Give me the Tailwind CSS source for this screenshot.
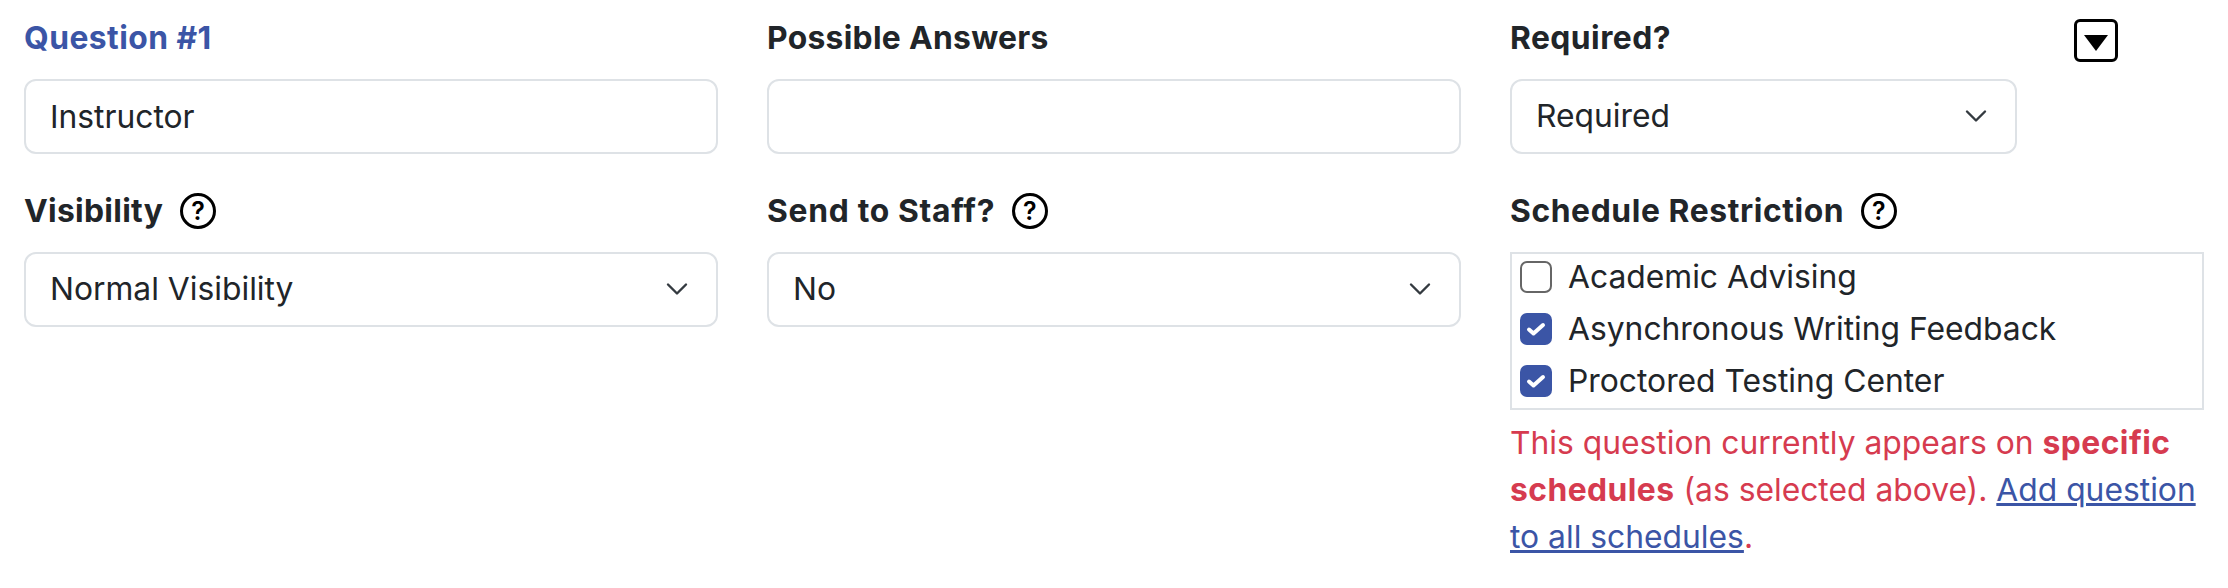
<!DOCTYPE html>
<html lang="en">
  <head>
    <meta charset="UTF-8" />
    <meta name="viewport" content="width=device-width, initial-scale=1.0" />
    <title>Question</title>
    <script src="https://cdn.jsdelivr.net/npm/@tailwindcss/browser@4"></script>
  </head>
  <body class="bg-white text-[#212529] font-['Inter',sans-serif] text-[31.8px] leading-[48px]">
    <div class="grid grid-cols-3 gap-x-[49px] px-6 pt-[14px]">
      <!-- row 1 -->
      <div>
        <div class="font-bold tracking-[0.45px] h-[48px] text-[#3b55a6]">Question #1</div>
        <input value="Instructor" class="mt-[17px] w-full h-[75px] px-[24px] pb-[1px] border-2 border-[#dee2e6] rounded-[12px]" />
      </div>
      <div>
        <div class="font-bold tracking-[0.3px] h-[48px]">Possible Answers</div>
        <input class="mt-[17px] w-full h-[75px] px-[24px] border-2 border-[#dee2e6] rounded-[12px]" />
      </div>
      <div class="relative">
        <div class="font-bold tracking-[0.45px] h-[48px]">Required?</div>
        <div class="relative mt-[17px] w-[507px] h-[75px] flex items-center px-[24px] pb-[2px] border-2 border-[#dee2e6] rounded-[12px]">
          Required
          <svg class="absolute right-[28px] top-[28px] w-[22px] h-[14px]" viewBox="0 0 22 14" fill="none" stroke="#343a40" stroke-width="2.4" stroke-linecap="round" stroke-linejoin="round"><path d="M2 2.5l9 9 9-9" /></svg>
        </div>
        <button class="absolute left-[564px] top-[5px] w-[44px] h-[43px] border-[3px] border-black rounded-[6px] flex items-center justify-center">
          <svg class="w-[28px] h-[20px] mt-[4px]" viewBox="0 0 28 20" fill="#000"><path d="M2 2h24L14 18z" /></svg>
        </button>
      </div>

      <!-- row 2 -->
      <div class="mt-[33px]">
        <div class="font-bold tracking-[0.3px] h-[48px] flex items-center gap-[17px]">Visibility
          <span class="w-[36px] h-[36px] border-[3px] border-black rounded-full flex items-center justify-center text-[25px] font-semibold text-black">?</span>
        </div>
        <div class="relative mt-[17px] h-[75px] flex items-center px-[24px] pb-[2px] border-2 border-[#dee2e6] rounded-[12px]">
          Normal Visibility
          <svg class="absolute right-[28px] top-[28px] w-[22px] h-[14px]" viewBox="0 0 22 14" fill="none" stroke="#343a40" stroke-width="2.4" stroke-linecap="round" stroke-linejoin="round"><path d="M2 2.5l9 9 9-9" /></svg>
        </div>
      </div>
      <div class="mt-[33px]">
        <div class="font-bold tracking-[0.7px] h-[48px] flex items-center gap-[17px]">Send to Staff?
          <span class="w-[36px] h-[36px] border-[3px] border-black rounded-full flex items-center justify-center text-[25px] font-semibold text-black">?</span>
        </div>
        <div class="relative mt-[17px] h-[75px] flex items-center px-[24px] pb-[2px] border-2 border-[#dee2e6] rounded-[12px]">
          No
          <svg class="absolute right-[28px] top-[28px] w-[22px] h-[14px]" viewBox="0 0 22 14" fill="none" stroke="#343a40" stroke-width="2.4" stroke-linecap="round" stroke-linejoin="round"><path d="M2 2.5l9 9 9-9" /></svg>
        </div>
      </div>
      <div class="mt-[33px]">
        <div class="font-bold tracking-[0.6px] h-[48px] flex items-center gap-[17px]">Schedule Restriction
          <span class="w-[36px] h-[36px] border-[3px] border-black rounded-full flex items-center justify-center text-[25px] font-semibold text-black">?</span>
        </div>
        <div class="mt-[17px] h-[158px] border-2 border-[#dee2e6] pl-[8px] pt-[7px] flex flex-col gap-[20px] leading-[32px]">
          <label class="h-[32px] flex items-center gap-[16px]">
            <span class="w-[32px] h-[32px] border-[2px] border-[#666] rounded-[7px] bg-white"></span>
            Academic Advising
          </label>
          <label class="h-[32px] flex items-center gap-[16px]">
            <span class="w-[32px] h-[32px] rounded-[7px] bg-[#3b55a6] flex items-center justify-center">
              <svg class="w-[22px] h-[22px]" viewBox="0 0 22 22" fill="none" stroke="#fff" stroke-width="4" stroke-linecap="round" stroke-linejoin="round"><path d="M4 11.5l4.5 4L18 7" /></svg>
            </span>
            Asynchronous Writing Feedback
          </label>
          <label class="h-[32px] flex items-center gap-[16px]">
            <span class="w-[32px] h-[32px] rounded-[7px] bg-[#3b55a6] flex items-center justify-center">
              <svg class="w-[22px] h-[22px]" viewBox="0 0 22 22" fill="none" stroke="#fff" stroke-width="4" stroke-linecap="round" stroke-linejoin="round"><path d="M4 11.5l4.5 4L18 7" /></svg>
            </span>
            Proctored Testing Center
          </label>
        </div>
        <p class="mt-[9px] text-[#d63b4f] leading-[47px]">This question currently appears on <b class="font-bold tracking-[0.45px]">specific schedules</b> (as selected above). <a href="#" class="text-[#3b55a6] underline">Add question to all schedules</a>.</p>
      </div>
    </div>
  </body>
</html>
